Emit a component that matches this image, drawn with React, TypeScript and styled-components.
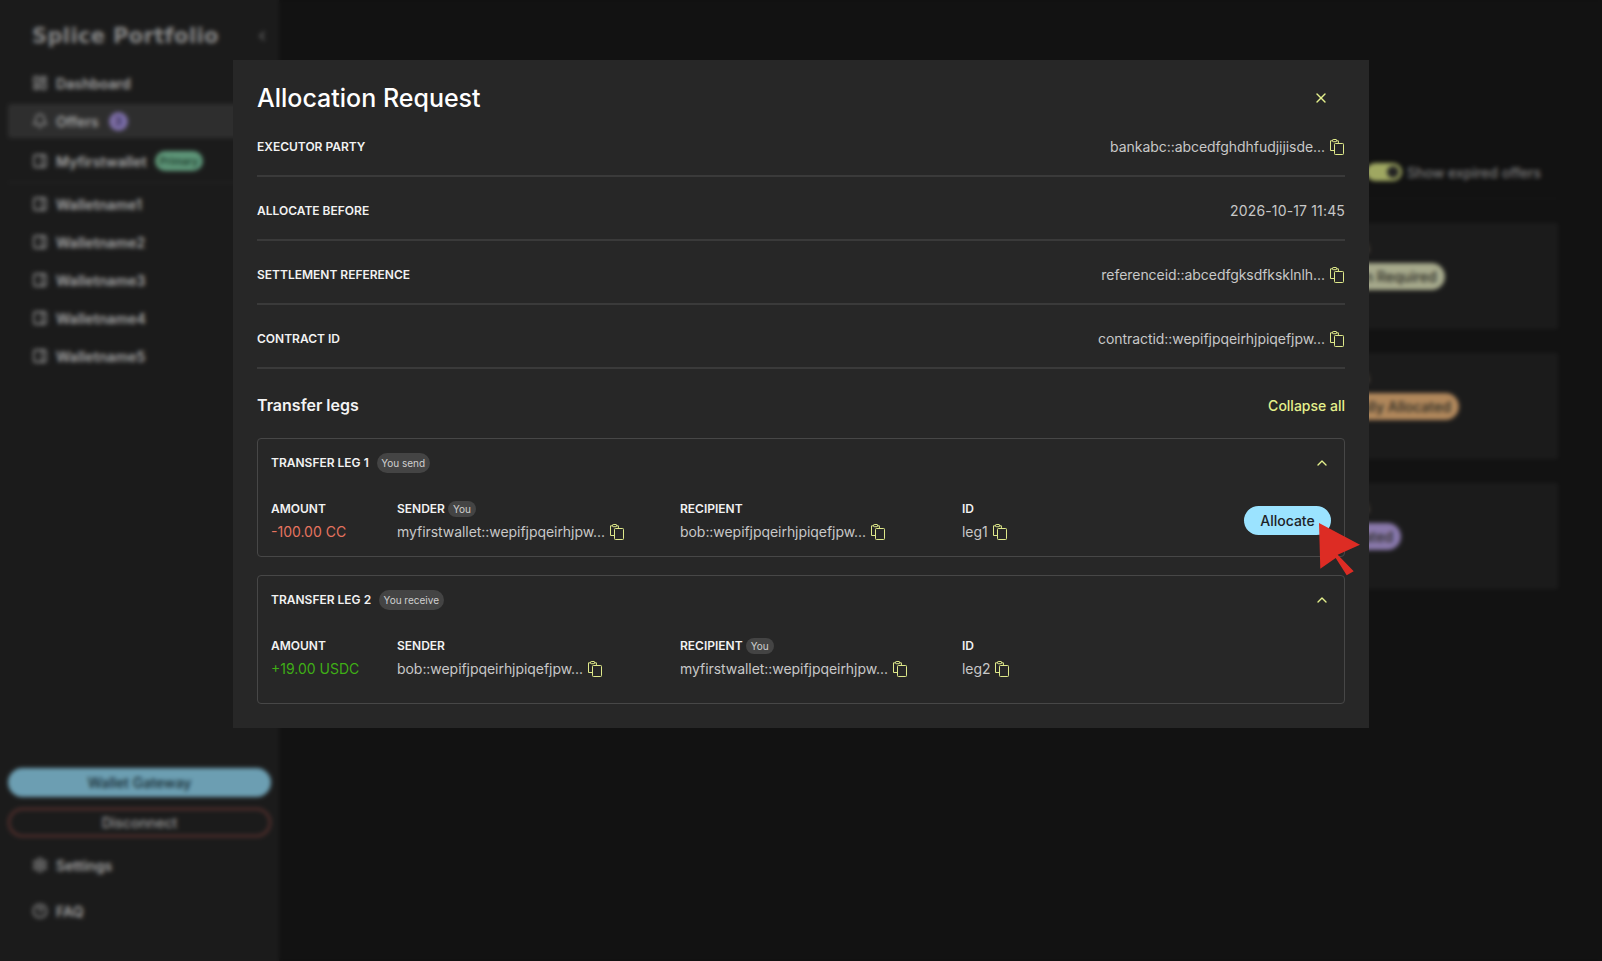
import React from 'react';
import styled, { createGlobalStyle } from 'styled-components';
import { Bell, ChevronLeft, ChevronUp, CircleHelp, LayoutDashboard, PanelRight, Settings, X } from 'lucide-react';

const GlobalStyle = createGlobalStyle`
  html, body {
    margin: 0;
    height: 100%;
    overflow: hidden;
    background: #1a1a1a;
    font-family: Inter, 'Liberation Sans', sans-serif;
  }
`;

const Page = styled.div`
  display: flex;
  height: 100vh;
`;

const Sidebar = styled.aside`
  display: flex;
  flex-direction: column;
  flex: 0 0 279px;
  box-sizing: border-box;
  padding: 0 8px 33px;
  background: #282828;
  color: #e8e8e8;
`;

const LogoRow = styled.div`
  display: flex;
  align-items: center;
  justify-content: space-between;
  box-sizing: border-box;
  height: 66px;
  padding: 6px 2px 0 24px;
`;

const Logo = styled.div`
  font-family: 'DejaVu Sans', sans-serif;
  font-size: 21px;
  font-weight: 700;
  letter-spacing: 0.35px;
  color: #c0c0c0;
`;

const NavList = styled.nav`
  display: flex;
  flex-direction: column;
  gap: 4px;
`;

const NavItem = styled.div<{ $active?: boolean }>`
  display: flex;
  align-items: center;
  gap: 8px;
  height: 34px;
  padding-left: 24px;
  border-radius: 4px;
  font-size: 14px;
  font-weight: 600;
  letter-spacing: 0.1px;
  background: ${p => (p.$active ? '#434343' : 'transparent')};
`;

const PrimaryWallet = styled(NavItem)`
  margin-top: 2px;
`;

const SideDivider = styled.hr`
  width: 100%;
  height: 1px;
  margin: 0;
  border: 0;
  background: #333;
`;

const CountDot = styled.span`
  display: grid;
  place-items: center;
  width: 19px;
  height: 19px;
  margin-left: 2px;
  border-radius: 50%;
  background: #b09cec;
  color: #4a3d78;
  font-size: 11px;
`;

const PrimaryTag = styled.span`
  padding: 3px 5px;
  border-radius: 10px;
  background: #86d6ac;
  color: #2f5c45;
  font-size: 10px;
  line-height: 14px;
`;

const SideFooter = styled.div`
  display: flex;
  flex-direction: column;
  gap: 12px;
  margin-top: auto;
`;

const SideButton = styled.button<{ $outline?: boolean }>`
  height: 29px;
  margin-bottom: -1px;
  border-radius: 15px;
  border: 2px solid ${p => (p.$outline ? '#8a4a45' : '#9be3ff')};
  background: ${p => (p.$outline ? 'transparent' : '#9be3ff')};
  color: ${p => (p.$outline ? '#d8d8d8' : '#1d3a46')};
  font: 500 14px Inter, sans-serif;
`;

const Main = styled.main`
  flex: 1;
  box-sizing: border-box;
  padding: 163px 44px 0 24px;
`;

const FilterRow = styled.div`
  display: flex;
  justify-content: flex-end;
  align-items: center;
  gap: 5px;
  height: 18px;
  padding: 0 17px 17px 0;
  border-bottom: 1px solid #252525;
  color: #b0b0b0;
  font-size: 14px;
  font-weight: 500;
`;

const Toggle = styled.span`
  display: flex;
  justify-content: flex-end;
  align-items: center;
  box-sizing: border-box;
  width: 36px;
  height: 18px;
  padding: 3px;
  border-radius: 9px;
  background: #e4f08c;

  &::after {
    content: '';
    width: 12px;
    height: 12px;
    border-radius: 50%;
    background: #333;
  }
`;

const OfferList = styled.div`
  display: flex;
  flex-direction: column;
  gap: 24px;
  margin-top: 24px;
`;

const OfferCard = styled.section`
  display: flex;
  flex-direction: column;
  gap: 6px;
  box-sizing: border-box;
  height: 106px;
  padding: 14px 0 0 1019px;
  background: #282828;
`;

const OfferHint = styled.span`
  color: #8f8f8f;
  font-size: 16px;
  line-height: 20px;
`;

const StatusPill = styled.span<{ $bg: string }>`
  align-self: flex-start;
  height: 27px;
  padding: 0 8px;
  border-radius: 14px;
  background: ${p => p.$bg};
  color: #3a3a30;
  font-size: 14px;
  font-weight: 500;
  line-height: 27px;
`;

const Overlay = styled.div`
  position: fixed;
  inset: 0;
  display: flex;
  justify-content: center;
  align-items: flex-start;
  padding-top: 60px;
  background: rgba(0, 0, 0, 0.3);
  backdrop-filter: blur(2px);
`;

const Modal = styled.div`
  box-sizing: border-box;
  width: 1136px;
  height: 668px;
  padding: 24px 24px 0;
  background: #272727;
  color: #f2f2f2;
`;

const ModalHeader = styled.header`
  display: flex;
  justify-content: space-between;
  align-items: center;
  height: 29px;
`;

const ModalTitle = styled.h2`
  margin: 0;
  font-size: 25px;
  font-weight: 500;
  line-height: 29px;
  color: #fff;
`;

const IconButton = styled.span`
  display: flex;
  margin: 0 16px 2px 0;
  color: #e4f08c;
`;

const InfoRow = styled.div`
  display: flex;
  justify-content: space-between;
  align-items: flex-start;
  box-sizing: border-box;
  height: 64px;
  padding-top: 24px;
  border-bottom: 2px solid #3a3a3a;
`;

const Label = styled.span`
  font-size: 12px;
  font-weight: 600;
  line-height: 20px;
  color: #f2f2f2;
`;

const Value = styled.span`
  display: flex;
  align-items: center;
  gap: 5px;
  font-size: 14px;
  letter-spacing: -0.05px;
  line-height: 20px;
  color: #c8c8c8;
`;

const CopyValue = styled(Value)`
  margin-right: 1px;
`;

const DateValue = styled(Value)`
  letter-spacing: 0.15px;
`;

const LegsHeader = styled.div`
  display: flex;
  justify-content: space-between;
  align-items: center;
  height: 24px;
  margin: 24px 0 21px;
`;

const LegsTitle = styled.h3`
  margin: 0;
  font-size: 16px;
  font-weight: 600;
  color: #f4f4f4;
`;

const CollapseAll = styled.span`
  font-size: 14px;
  font-weight: 500;
  color: #e4f08c;
`;

const LegCard = styled.section<{ $bottom: number }>`
  box-sizing: border-box;
  padding: 14px 13px ${p => p.$bottom}px;
  margin-bottom: 18px;
  border: 1px solid #474747;
  border-radius: 4px;
`;

const LegHeader = styled.div`
  display: flex;
  align-items: center;
  gap: 8px;
  height: 20px;
  margin-bottom: 26px;
`;

const Badge = styled.span<{ $small?: boolean }>`
  padding: 0 ${p => (p.$small ? 5 : 4.5)}px;
  border-radius: 10px;
  background: #444;
  color: #cfcfcf;
  font-size: 10px;
  line-height: ${p => (p.$small ? 16 : 20)}px;
`;

const Chevron = styled.span`
  display: flex;
  margin: 0 1px 0 auto;
  color: #e4f08c;
`;

const LegBody = styled.div`
  display: flex;
  align-items: flex-start;
`;

const LegColumn = styled.div<{ $width: number }>`
  display: flex;
  flex-direction: column;
  gap: 3px;
  flex: 0 0 ${p => p.$width}px;
`;

const ColumnHead = styled.div`
  display: flex;
  align-items: center;
  gap: 3px;
`;

const Amount = styled.span<{ $color: string }>`
  font-size: 14px;
  line-height: 20px;
  color: ${p => p.$color};
`;

const AllocateButton = styled.button`
  position: relative;
  box-sizing: border-box;
  width: 87px;
  height: 29px;
  margin: 7px 0 0 auto;
  padding: 0;
  border: 0;
  border-radius: 15px;
  background: #9be3ff;
  color: #1d2226;
  font: 500 14px Inter, sans-serif;
`;

const Pointer = styled.svg`
  position: absolute;
  left: 75px;
  top: 17px;
`;

const CopyIcon = () => (
  <svg width="14" height="16" viewBox="0 0 14 16" fill="none" stroke="#dfe98a" strokeWidth="1">
    <path d="M4 11.5H.5V1.8H2.6M6.6 1.8H8.4V4" />
    <rect x="2.6" y=".5" width="4" height="2.2" rx=".6" />
    <rect x="4.5" y="4.5" width="9" height="11" rx=".8" />
  </svg>
);

const wallets = ['Walletname1', 'Walletname2', 'Walletname3', 'Walletname4', 'Walletname5'];

const offers = [
  { status: 'Action Required', color: '#eef2c8' },
  { status: 'Partially Allocated', color: '#fdc283' },
  { status: 'Allocated', color: '#c4acf4' },
];

export default function App() {
  return (
    <>
      <GlobalStyle />
      <Page>
        <Sidebar>
          <LogoRow>
            <Logo>Splice Portfolio</Logo>
            <ChevronLeft size={14} strokeWidth={3} color="#999" />
          </LogoRow>
          <NavList>
            <NavItem><LayoutDashboard size={16} />Dashboard</NavItem>
            <NavItem $active><Bell size={16} />Offers<CountDot>3</CountDot></NavItem>
            <PrimaryWallet><PanelRight size={16} />Myfirstwallet<PrimaryTag>Primary</PrimaryTag></PrimaryWallet>
            <SideDivider />
            {wallets.map(name => (
              <NavItem key={name}><PanelRight size={16} />{name}</NavItem>
            ))}
          </NavList>
          <SideFooter>
            <SideButton>Wallet Gateway</SideButton>
            <SideButton $outline>Disconnect</SideButton>
            <NavItem><Settings size={16} />Settings</NavItem>
            <NavItem><CircleHelp size={16} />FAQ</NavItem>
          </SideFooter>
        </Sidebar>
        <Main>
          <FilterRow><Toggle />Show expired offers</FilterRow>
          <OfferList>
            {offers.map(o => (
              <OfferCard key={o.status}>
                <OfferHint>Status</OfferHint>
                <StatusPill $bg={o.color}>{o.status}</StatusPill>
              </OfferCard>
            ))}
          </OfferList>
        </Main>
      </Page>

      <Overlay>
        <Modal>
          <ModalHeader>
            <ModalTitle>Allocation Request</ModalTitle>
            <IconButton><X size={16} strokeWidth={2} /></IconButton>
          </ModalHeader>
          <InfoRow>
            <Label>EXECUTOR PARTY</Label>
            <CopyValue>bankabc::abcedfghdhfudjijisde...<CopyIcon /></CopyValue>
          </InfoRow>
          <InfoRow>
            <Label>ALLOCATE BEFORE</Label>
            <DateValue>2026-10-17 11:45</DateValue>
          </InfoRow>
          <InfoRow>
            <Label>SETTLEMENT REFERENCE</Label>
            <CopyValue>referenceid::abcedfgksdfksklnlh...<CopyIcon /></CopyValue>
          </InfoRow>
          <InfoRow>
            <Label>CONTRACT ID</Label>
            <CopyValue>contractid::wepifjpqeirhjpiqefjpw...<CopyIcon /></CopyValue>
          </InfoRow>
          <LegsHeader>
            <LegsTitle>Transfer legs</LegsTitle>
            <CollapseAll>Collapse all</CollapseAll>
          </LegsHeader>

          <LegCard $bottom={14}>
            <LegHeader>
              <Label>TRANSFER LEG 1</Label>
              <Badge>You send</Badge>
              <Chevron><ChevronUp size={16} strokeWidth={2} /></Chevron>
            </LegHeader>
            <LegBody>
              <LegColumn $width={126}>
                <Label>AMOUNT</Label>
                <Amount $color="#e5735f">-100.00 CC</Amount>
              </LegColumn>
              <LegColumn $width={283}>
                <ColumnHead><Label>SENDER</Label><Badge $small>You</Badge></ColumnHead>
                <Value>myfirstwallet::wepifjpqeirhjpw...<CopyIcon /></Value>
              </LegColumn>
              <LegColumn $width={282}>
                <ColumnHead><Label>RECIPIENT</Label></ColumnHead>
                <Value>bob::wepifjpqeirhjpiqefjpw...<CopyIcon /></Value>
              </LegColumn>
              <LegColumn $width={60}>
                <Label>ID</Label>
                <Value>leg1<CopyIcon /></Value>
              </LegColumn>
              <AllocateButton>
                Allocate
                <Pointer width="42" height="53" viewBox="0 0 42 53">
                  <path d="M0 0L41 21.7L18.7 31.7L34.7 48.3L27.7 52.3L16.7 35L1.3 45.7Z" fill="#dd2c24" />
                </Pointer>
              </AllocateButton>
            </LegBody>
          </LegCard>

          <LegCard $bottom={24}>
            <LegHeader>
              <Label>TRANSFER LEG 2</Label>
              <Badge>You receive</Badge>
              <Chevron><ChevronUp size={16} strokeWidth={2} /></Chevron>
            </LegHeader>
            <LegBody>
              <LegColumn $width={126}>
                <Label>AMOUNT</Label>
                <Amount $color="#3fae16">+19.00 USDC</Amount>
              </LegColumn>
              <LegColumn $width={283}>
                <ColumnHead><Label>SENDER</Label></ColumnHead>
                <Value>bob::wepifjpqeirhjpiqefjpw...<CopyIcon /></Value>
              </LegColumn>
              <LegColumn $width={282}>
                <ColumnHead><Label>RECIPIENT</Label><Badge $small>You</Badge></ColumnHead>
                <Value>myfirstwallet::wepifjpqeirhjpw...<CopyIcon /></Value>
              </LegColumn>
              <LegColumn $width={60}>
                <Label>ID</Label>
                <Value>leg2<CopyIcon /></Value>
              </LegColumn>
            </LegBody>
          </LegCard>
        </Modal>
      </Overlay>
    </>
  );
}
